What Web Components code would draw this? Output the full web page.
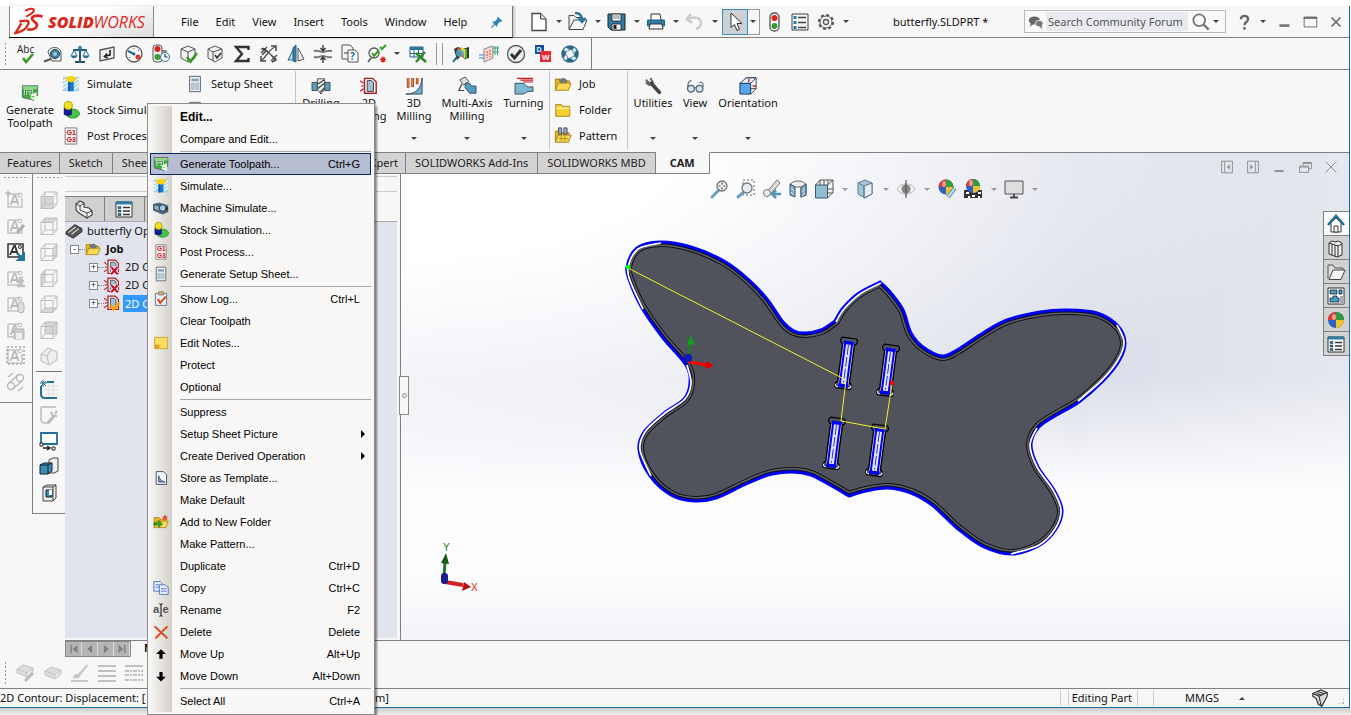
<!DOCTYPE html>
<html lang="en">
<head>
<meta charset="utf-8">
<title>butterfly.SLDPRT</title>
<style>
  body { margin: 0; background: #fff; font: 12px/16px "Noto Sans", "Open Sans", sans-serif; color: #111; }
</style>
</head>
<body>
<cad-app></cad-app>

<script>
/* ---------- icons, all on a 20 x 20 grid ---------- */

const cube = (face = '', stroke = '#bdbdbd') => `<path d="${face}" fill="#d6d6d6"/>
  <path d="M2 6.500h12v12h-12zM6 2h12v12h-12zM2 6.500L6 2M14 6.500L18 2M2 18.500L6 14M14 18.500L18 14" fill="none" stroke="${stroke}"/>`
const note = extra => `<path d="M2 4h12M2 4v13h14v-9" fill="none" stroke="#c4c4c4" stroke-width="1.500"/>
  <path d="M4.500 15L8 6h1.500l3 9M6 12h5" fill="none" stroke="#bbb" stroke-width="1.800"/><circle cx="14" cy="5" r="2" fill="none" stroke="#bbb"/>${extra}`
const lens = (x, y) => `<path d="M${x - 3} ${y + 4}L2 18" stroke="#6ba0bd" stroke-width="3" stroke-linecap="round"/>
  <circle cx="${x}" cy="${y}" r="5" fill="#e9eef2" stroke="#777" stroke-width="1.300"/>`
const ball = (x, y, r) => `<circle cx="${x}" cy="${y}" r="${r}" fill="#2c62c4"/>
  <path d="M${x} ${y}V${y - r}A${r} ${r} 0 0 0 ${x - r} ${y}z" fill="#e03a2b"/><path d="M${x} ${y}V${y - r}A${r} ${r} 0 0 1 ${x + r} ${y}z" fill="#2f9e3f"/>
  <path d="M${x} ${y}V${y + r}A${r} ${r} 0 0 0 ${x + r} ${y}z" fill="#f2c22e"/><ellipse cx="${x - 2}" cy="${y - 3}" rx="2" ry="3" fill="#fff" opacity=".5"/>`
const folder = '<path d="M1.500 17V4.500h6l1.500 2h8v2" fill="#e8b920" stroke="#a87e10"/><path d="M1.500 17l3-8h14.500l-3 8z" fill="#f7d958" stroke="#a87e10"/>'
const contour = mark => `<path d="M5 1.500h9l4 4V18H5z" fill="#fff" stroke="#b01c24" stroke-width="1.600"/><path d="M8 4h5l2 2v10H8z" fill="#9fc0d2" stroke="#334"/>
  <path d="M0 4l4 3M0 16l4-3M1 10h3" stroke="#b01c24" stroke-width="1.300"/>${mark}`

const icons = {
  abc: '<text x="1" y="9" font-size="10" font-family="Open Sans, sans-serif" fill="#222">Abc</text><path d="M7 14l3 4 7-8" fill="none" stroke="#3b9b22" stroke-width="2.600"/>',
  tape: '<path d="M5 8c1-6 12-6 13 0v9H9z" fill="#eee" stroke="#555"/><circle cx="12" cy="10" r="4.500" fill="#3d86ab" stroke="#234"/><circle cx="12" cy="10" r="2" fill="#9fc8dc"/><path d="M8 15l-7 2.500" stroke="#555" stroke-width="2"/>',
  scale: '<path d="M10 2v15M5 18h10M3 6h14" stroke="#22597a" stroke-width="2"/><path d="M1 12l3-6 3 6zM13 12l3-6 3 6z" fill="#e8f0f4" stroke="#2e6f94"/><path d="M1 12c1 3 5 3 6 0zM13 12c1 3 5 3 6 0z" fill="#2e6f94"/><circle cx="10" cy="4" r="2" fill="#2e7faa"/>',
  section: '<path d="M3 6l14-3v11L3 17z" fill="#eee" stroke="#555" stroke-width="1.300"/><path d="M13 6v5l-5 1M10 9.500L7.500 12.500l3 1.500" fill="none" stroke="#222" stroke-width="1.600"/>',
  gauge: '<circle cx="10" cy="10" r="8" fill="#fafafa" stroke="#555" stroke-width="1.300"/><path d="M10 10L4 7" stroke="#1b6d9c" stroke-width="2"/><path d="M10 4v1M15 6l-1 1M5 14l1-1" stroke="#555"/><circle cx="14" cy="13" r="2.500" fill="#d33"/><circle cx="10" cy="10" r="1.500" fill="#1b6d9c"/>',
  lights: '<rect x="2" y="1" width="9" height="17" rx="3" fill="#eee" stroke="#555"/><circle cx="6.500" cy="5" r="3" fill="#d9261c"/><circle cx="6.500" cy="13" r="3" fill="#3a9b2e"/><circle cx="14" cy="13" r="4.500" fill="#eef6fa" stroke="#2b6f93"/><path d="M14 10v3h2.500M11 7h5" stroke="#222" fill="none"/>',
  boxcheck: '<path d="M10 2l7 3v9l-7 4-7-4V5z" fill="#f2f2f2" stroke="#555"/><path d="M3 5l7 3 7-3M10 8v10" fill="none" stroke="#555"/><path d="M9 13l3.500 4.500L19 9" fill="none" stroke="#3b9b22" stroke-width="2.600"/>',
  boxcheck2: '<path d="M10 2l7 3v9l-7 4-7-4V5z" fill="#eee" stroke="#555"/><path d="M3 5l5 3v9M8 8l9-3" fill="none" stroke="#555"/><path d="M10 11l2 3 4-5" fill="none" stroke="#333" stroke-width="1.600"/>',
  sigma: '<path d="M16.500 6V3H4l6 7-6 7h12.500v-3" fill="none" stroke="#333" stroke-width="2.400"/>',
  cross: '<path d="M2 5c5-2 8 6 15 10M3 16C8 12 9 6 16 3M2 9l6-6M12 17l6-6" fill="none" stroke="#444" stroke-width="1.300"/><path d="M12 2h5v5M2 12v5h5M4 4l3 3-4 4M13 12l4 4-4 2" fill="none" stroke="#444" stroke-width="1.500"/>',
  mirror: '<path d="M2 16L8 4v12z" fill="#bddbe8" stroke="#245f80"/><path d="M10 1v17l-3-1V4z" fill="#3982a8" stroke="#245f80"/><path d="M12 4l6 11-6 2z" fill="#f3f3f3" stroke="#555"/>',
  thick: '<path d="M1 7c5-1 6 1 9 1s4-2 9-1M1 13c5 1 6-1 9-1s4 2 9 1" fill="none" stroke="#777" stroke-width="2"/><path d="M10 1v5M7.500 4l2.500 3 2.500-3M10 19v-5M7.500 16l2.500-3 2.500 3" fill="none" stroke="#333" stroke-width="1.300"/>',
  query: '<path d="M2 1h8l3 3v11H2z" fill="#f5f5f5" stroke="#555"/><path d="M8 6h7l3 3v9H8z" fill="#fff" stroke="#555"/><path d="M4 9h4" stroke="#333"/><text x="10" y="16" font-size="10" font-weight="bold" font-family="Open Sans, sans-serif" fill="#1d6d9b">?</text>',
  geom: '<circle cx="7" cy="9" r="5" fill="#fff" stroke="#555" stroke-width="1.300"/><path d="M5 9l2 3 5-6M13 3l2 2 4-4" fill="none" stroke="#3b9b22" stroke-width="2"/><path d="M4 14l-3 4" stroke="#555" stroke-width="1.500"/><path d="M14 13.500l4 4M18 13.500l-4 4M16 12.500v6M13 15.500h6" stroke="#d6201a" stroke-width="1.200"/>',
  excel: '<path d="M2 3h13v10H2z" fill="#fff" stroke="#245f80"/><path d="M2 3h13v3H2z" fill="#2d779f"/><path d="M2 9.500h13M6 6v7M10.500 6v7" stroke="#245f80"/><path d="M8 9l10 9M17 8l-9 10" stroke="#2f8a2a" stroke-width="2.600"/>',
  sim: '<path d="M2 5l4-2 4 2 7-2v11l-4 1-4-3-4 4z" fill="#333"/><path d="M6 6c4-3 6 2 5 7" fill="none" stroke="#e63a1e" stroke-width="3"/><path d="M9 5c4 0 5 5 4 9" fill="none" stroke="#f1dd26" stroke-width="3"/><path d="M14 5v9" stroke="#3bbb40" stroke-width="2"/><circle cx="8" cy="9" r="4" fill="#5bc2e7" opacity=".7"/><path d="M5 13l-4 5" stroke="#245f80" stroke-width="2"/>',
  flow: '<path d="M5 5l9-3v12l-9 4z" fill="#f7d9d6" stroke="#888"/><path d="M8 7v7M11 6v7" stroke="#d33" stroke-dasharray="2 1"/><path d="M0 11h5M0 14h5M14 4h6M14 8h6" stroke="#2c8fdc"/><path d="M16 2v9M18.500 2v9" stroke="#37b04b"/>',
  tick: '<circle cx="10" cy="10" r="8.500" fill="#f0f0f0" stroke="#555" stroke-width="1.300"/><path d="M5 10l3.500 4L15 6" fill="none" stroke="#333" stroke-width="3"/>',
  dw: '<path d="M2 1h9v9H2z" fill="#0c50a0"/><path d="M7 7h11v11H7z" fill="#ea2b35"/><text x="3.500" y="8" font-size="7" font-weight="bold" font-family="Liberation Sans, sans-serif" fill="#fff">D</text><text x="9" y="16" font-size="8" font-weight="bold" font-family="Liberation Sans, sans-serif" fill="#fff">W</text>',
  wheel: '<circle cx="10" cy="10" r="6.500" fill="none" stroke="#2c6788" stroke-width="4.500"/><path d="M6 3l4 3-4 2-3-2zM17 6l-3 4-2-4 2-3zM14 17l-4-3 4-2 3 2zM3 14l3-4 2 4-2 3z" fill="#d3e8f1" stroke="#245f80" stroke-width=".6"/>',
  new: '<path d="M3 1.500h8.500L17 7v11.500H3z" fill="#fff" stroke="#444" stroke-width="1.300"/><path d="M11.500 1.500V7H17" fill="#ddd" stroke="#444"/>',
  open: '<path d="M1 17V3.500h5l2 2h7V9" fill="#eee" stroke="#444"/><path d="M1 17.500L6 8h13l-4 9.500z" fill="#f5f5f5" stroke="#444"/><path d="M7 1c5 0 7 2 7 7M10.500 6l3.500 4 3.500-4" fill="none" stroke="#2a7499" stroke-width="2.400"/>',
  save: '<path d="M1 2h17v16H4l-3-3z" fill="#2f7ba2" stroke="#222"/><path d="M5 2h9v7H5z" fill="#f3f3f3" stroke="#222" stroke-width=".8"/><path d="M6 4h7M6 6h7" stroke="#888"/><path d="M5 12h9v6H5z" fill="#f3f3f3" stroke="#222" stroke-width=".8"/><path d="M6.500 13h3v4h-3z" fill="#222"/>',
  print: '<path d="M5 8V2h9l1 6" fill="#fff" stroke="#333"/><path d="M1.500 8h17v6h-17z" fill="#2f7ba2" stroke="#245f80"/><path d="M4 12h12l1 5H3z" fill="#f5f5f5" stroke="#333"/>',
  undo: '<path d="M6 2L2 7l5 4M3 7c7-3 13-1 13 4 0 3-2 5-5 6" fill="none" stroke="#ccc" stroke-width="2.600"/>',
  cursor: '<path d="M6 1v14.500l3.500-3 2.500 6 2.500-1-2.500-6H17z" fill="#fff" stroke="#333"/>',
  traffic: '<rect x="6" y="1" width="9" height="18" rx="4" fill="#f4f4f4" stroke="#555" stroke-width="1.300"/><circle cx="10.500" cy="6" r="3" fill="#d9261c"/><circle cx="10.500" cy="14" r="3" fill="#3a9b2e"/>',
  list: '<path d="M2 2h16v16H2z" fill="#f5f5f5" stroke="#444"/><path d="M8 5.500h8M8 10.500h8M8 15.500h8" stroke="#444" stroke-width="1.300"/><path d="M3.500 4h3v3h-3zM3.500 9h3v3h-3zM3.500 14h3v3h-3z" fill="#2f7ba2"/>',
  gear: '<circle cx="10" cy="10" r="7" fill="none" stroke="#555" stroke-width="2.200" stroke-dasharray="3 2.500"/><circle cx="10" cy="10" r="6" fill="#f7f7f7" stroke="#555"/><circle cx="10" cy="10" r="2.500" fill="none" stroke="#555" stroke-width="1.300"/>',
  pin: '<path d="M11 2l7 7-4 1-3 3-1 4-7-7 4-1 3-3z" fill="#2d86b4"/><path d="M7 13l-5 5" stroke="#2d86b4" stroke-width="1.800"/>',
  chat: '<ellipse cx="8" cy="8" rx="7" ry="5" fill="#666"/><path d="M4 11l-2 5 6-4z" fill="#666"/><ellipse cx="14" cy="12" rx="5" ry="4" fill="#777" stroke="#fff"/><path d="M14 15l4 4-1-5z" fill="#777"/>',
  search: '<circle cx="8" cy="8" r="6.500" fill="none" stroke="#777" stroke-width="2"/><path d="M13 13l5.500 5.500" stroke="#777" stroke-width="2.600"/>',
  help: '<path d="M6.500 7c0-5 8-5 8 0 0 3-4 3-4 6.500M10.500 15.500v3" fill="none" stroke="#666" stroke-width="2.600"/>',
  min: '<path d="M5 14h11" stroke="#777" stroke-width="3"/>',
  max: '<path d="M3.500 4.500h14v11h-14z" fill="none" stroke="#666"/><path d="M3 5.500h15" stroke="#666" stroke-width="2"/>',
  close: '<path d="M5 5l10 10M15 5L5 15" stroke="#666" stroke-width="1.800"/>',
  restore: '<path d="M8 8V5h9v7h-3M4 9h10v7H4z" fill="none" stroke="#888"/><path d="M8 6h9M4 10h10" stroke="#888"/>',
  mini: '<path d="M5 14.500h10" stroke="#888" stroke-width="2"/>',
  shut: '<path d="M4 4l12 12M16 4L4 16" stroke="#888"/>',
  paneL: '<path d="M4 3.500h12v13H4zM7.500 4v12" fill="none" stroke="#888"/><path d="M13 7l-3 3 3 3z" fill="#888"/>',
  paneR: '<path d="M4 3.500h12v13H4zM12.500 4v12" fill="none" stroke="#888"/><path d="M7 7l3 3-3 3z" fill="#888"/>',
  toolpath: '<path d="M1.500 2h17v11h-4v5l-13-3z" fill="#3fae3a" stroke="#567"/><path d="M2 2.500h16v3H2z" fill="#8fd980"/><path d="M5 12V7h7v4h-3M11 13l5-2v6l-5-2" fill="none" stroke="#e8f8e4" stroke-width="2.600"/><path d="M5 12V7h7v4h-3" fill="none" stroke="#2a6b27"/>',
  simulate: '<path d="M1 2h18v16H1z" fill="#a9d3ee"/><path d="M1 7l5-3M1 11l6-4M1 15l6-4M13 8l6-4M13 12l6-4M13 16l6-4" stroke="#fff" stroke-width="1.400"/><path d="M7 6h6v12H7z" fill="#1878d4"/><path d="M7 6h2v12H7z" fill="#0b54a6"/><ellipse cx="10" cy="4.500" rx="6" ry="3.500" fill="#f4d414"/>',
  machine: '<path d="M0 5l8-2 11 4v8l-7 3-12-5z" fill="#4b6477"/><circle cx="12" cy="10" r="4" fill="#a8cade" stroke="#234"/><path d="M2 7l5 1v5l-5-2z" fill="#8fb4cc"/><circle cx="17" cy="11" r="2" fill="#333"/>',
  stock: '<ellipse cx="12" cy="14" rx="7.500" ry="5" fill="#45c445" stroke="#2a8e30"/><path d="M2 7h9v8c-2 2-7 2-9 0z" fill="#141c8c"/><circle cx="7" cy="5" r="4.500" fill="#f0e018" stroke="#a39a10"/>',
  post: '<path d="M3.500 1h13v18h-13z" fill="#f3eeee" stroke="#777"/><text x="5" y="9" font-size="8" font-weight="bold" font-family="Liberation Sans, sans-serif" fill="#c01818">G1</text><text x="5" y="17" font-size="8" font-weight="bold" font-family="Liberation Sans, sans-serif" fill="#c01818">G3</text>',
  sheet: '<path d="M4 1.500h12v17H4z" fill="#f0f3f5" stroke="#556"/><path d="M6 4h8v3H6z" fill="#8ba2b0"/><path d="M6 9h3v7H6zM10.500 9h3.500v7h-3.500z" fill="#bccbd4" stroke="#8ba2b0" stroke-width=".6"/>',
  drill: '<path d="M0 6h6v9H0zM14 6h6v9h-6z" fill="#5b9dbb" stroke="#345"/><path d="M6 2h8v12l-4 5-4-5z" fill="#eee" stroke="#444"/><path d="M6 8l8-5M6 13l8-6M9 17l5-5" stroke="#444" stroke-width="1.500"/>',
  mill2d: contour(''),
  mill3d: '<path d="M1 19C13 19 18 12 19 1v18z" fill="#6ab0d4" stroke="#345"/><path d="M3.500 1v11M8.500 1v10M13.500 1v7" stroke="#a33b1b" stroke-width="3"/><path d="M3.500 1v10M8.500 1v9M13.500 1v6" stroke="#f3a263" stroke-width="1"/>',
  axis: '<path d="M2 3l6-3 4 5-6 4z" fill="#ddd" stroke="#444"/><path d="M4 8l-3 7h6" fill="none" stroke="#444" stroke-width="1.300"/><path d="M8 7h5l2 3h5v8h-7l-5-6z" fill="#4f9dc2" stroke="#345"/>',
  turning: '<path d="M2 1.500h18M6 3.500h14M9 5.500h11" stroke="#c21c1c" stroke-width="1.200"/><path d="M0 7h8c4 0 4 4 7 4h5v5h-5c-3 0-3 3-7 3H0z" fill="#7bb8d4" stroke="#345"/>',
  job: folder + '<path d="M5 5l6-2 4 3-1 3H7z" fill="#777"/>',
  folder: '<path d="M2 17V4h6l2 2h7.500v11z" fill="#f4d02e" stroke="#a87e10"/><path d="M2.500 8h14.500" stroke="#fbeb9a" stroke-width="2"/>',
  pattern: folder + '<path d="M5 1h3.500v7H5zM11 1h3.500v7H11z" fill="#9ab" stroke="#445"/><path d="M8 10v6M12 10v6M5 13h11" stroke="#a8901c"/>',
  wrench: '<path d="M2 3l4 4M7 1l3 5-4 3-4-3" fill="none" stroke="#666" stroke-width="2.200"/><path d="M8 7l9 10" stroke="#444" stroke-width="4" stroke-linecap="round"/>',
  glasses: '<circle cx="5.500" cy="13" r="3.800" fill="#cfe4f2" stroke="#567" stroke-width="1.400"/><circle cx="15" cy="13" r="3.800" fill="#cfe4f2" stroke="#567" stroke-width="1.400"/><path d="M2 11c0-4 1-7 4-7M19 11c0-3 0-6-4-5M9 12h2" fill="none" stroke="#567" stroke-width="1.200"/>',
  orient: '<path d="M8 1h11v12H8z" fill="#fff" stroke="#333"/><path d="M1 7h12v12H1z" fill="#58a7ec" stroke="#135"/><path d="M1 7l7-6h11l-6 6zM13 19l6-6" fill="#eaf4fc" stroke="#135"/><path d="M11 2v4M15 10h4" stroke="#c22" stroke-width="1.500"/>',
  n1: note('<path d="M2 0v6M-1 3h6" stroke="#aaa"/>'), n2: note('<path d="M11 17l7-8" stroke="#b0b0b0" stroke-width="3"/>'),
  n3: '<path d="M2 2h15v13H2z" fill="none" stroke="#333" stroke-width="1.500"/><path d="M4 13L8 4h1l3 9M5 10h6" fill="none" stroke="#333" stroke-width="1.800"/><circle cx="14" cy="5" r="1.500" fill="none" stroke="#333"/><path d="M11 11l6 6M18 12v6h-6z" stroke="#2477a0" stroke-width="2" fill="#2477a0"/>',
  n4: note('<path d="M14 9v8M10 13h8M11 18h8" stroke="#c0c0c0" stroke-width="2.500"/>'), n5: note('<rect x="12" y="8" width="6" height="11" rx="3" fill="#ddd" stroke="#b5b5b5"/>'),
  n6: note('<path d="M8 9h10v10H8z" fill="#ccc" stroke="#b5b5b5"/><path d="M10 13h6v6h-6z" fill="#eee"/>'), n7: note('<path d="M1 1h17v17H1z" fill="none" stroke="#bbb" stroke-width="2" stroke-dasharray="2 2"/>'),
  n8: '<circle cx="5" cy="14" r="3.500" fill="none" stroke="#bbb" stroke-width="1.500"/><circle cx="14" cy="6" r="3.500" fill="none" stroke="#bbb" stroke-width="1.500"/><path d="M3 11l9-8M7 17l9-8M2 5l5-4M12 19l5-4" stroke="#bbb" stroke-width="1.500"/>',
  c1: cube('M2 6h12v12H2z'), c2: cube('M2 6l4-4h12l-4 4z'), c3: cube('M14 6l4-4v12l-4 4z'), c4: cube('M2 6l4-4v12l-4 4z'),
  c5: cube('M2 18l4-4h12l-4 4z'), c6: cube('M6 2h12v12H6z'),
  c7: '<path d="M2 8l7-6 9 4v8l-8 5-8-4z" fill="#eee" stroke="#bbb"/><path d="M2 8l6 2 4-6M8 10l2 9" fill="none" stroke="#bbb"/>',
  sk1: '<path d="M7 7h12M7 11h12M7 15h12M10 4v14M14 4v14" stroke="#ddd"/><path d="M2 7v8c0 3 1 4 4 4h12M8 3h7" fill="none" stroke="#226f97" stroke-width="2"/><path d="M4 1v7M1 4h7M2 2l5 5M7 2L2 7" stroke="#226f97"/>',
  sk2: '<path d="M2 2h15M2 2v12c0 3 1 4 4 4h4" fill="none" stroke="#bbb" stroke-width="1.500"/><path d="M9 18l6-7" stroke="#bbb" stroke-width="3"/><path d="M12 7l2 4h4M18 6l-2 3" fill="none" stroke="#bbb" stroke-width="2"/>',
  sk3: '<path d="M2 2h16v11H2z" fill="#fff" stroke="#226f97" stroke-width="1.800"/><path d="M1 12h3v3H1zM13 16h3v3h-3z" fill="#fff" stroke="#222"/><path d="M4 17h6M8 15l3 2-3 2" fill="none" stroke="#222" stroke-width="1.400"/>',
  sk4: '<path d="M10 3l4-2h5v13l-4 2h-5z" fill="#eee" stroke="#444"/><path d="M1 8l4-2h8v8l-4 3H1z" fill="#3d8db3" stroke="#123"/><path d="M1 8h8l4-2M9 8v9" fill="none" stroke="#123"/>',
  sk5: '<path d="M4 4l4-2h9v13l-3 3H4z" fill="#eee" stroke="#444"/><path d="M4 4h10v14M14 4l3-2" fill="none" stroke="#444"/><path d="M7 7h6v7H7z" fill="#3d8db3" stroke="#123"/><path d="M10 7h3v5h-3z" fill="#fff"/>',
  zoomfit: lens(12, 7) + '<path d="M12 3.500v2M12 8.500v2M8.500 7h2M13.500 7h2" stroke="#444" stroke-width="1.200"/>',
  zoomarea: '<path d="M7 1h11v15H7z" fill="none" stroke="#666" stroke-dasharray="2 2"/>' + lens(11, 9),
  prev: '<path d="M3 15L15 1l3 3L7 17z" fill="#ddd" stroke="#777"/><circle cx="5" cy="14" r="3.500" fill="#eee" stroke="#777"/><path d="M19 15h-8M14 11l-4 4 4 4" fill="none" stroke="#5593b4" stroke-width="2.500"/>',
  cut: '<path d="M2 5c4-4 12-4 16 0v11l-5 2V8H7z" fill="#eee" stroke="#666"/><path d="M2 5l5 3v10l-5-2zM13 8l5-3v11l-5 2z" fill="#7ab0ca" stroke="#456"/><path d="M3 9l3 3M3 13l3 3M14 13l3-3M14 17l3-3" stroke="#dceaf1"/>',
  views: '<path d="M6 1h13v13H6z" fill="#f3f3f3" stroke="#555"/><path d="M10 1v5M14 1v5M14 10h5" stroke="#555"/><path d="M1.500 6h12v13h-12z" fill="#8fbdd2" stroke="#456"/><path d="M1.500 6L6 1M13.500 6L19 1M13.500 19l5-5" stroke="#555"/>',
  shade: '<path d="M3 4l7-3 7 3v11l-7 4-7-4z" fill="#9fc8db" stroke="#678"/><path d="M9 7l8-3v11l-8 4z" fill="#e3eef3" stroke="#678"/><path d="M3 4l6 3v12" fill="none" stroke="#678"/>',
  eye: '<path d="M1 10c4-7 14-7 18 0-4 7-14 7-18 0z" fill="#eee" stroke="#bbb"/><circle cx="10" cy="10" r="4.500" fill="#888"/><path d="M10 1v18" stroke="#555" stroke-width="1.200"/>',
  paint: ball(9, 8, 7.500) + '<path d="M18 9l-7 9" stroke="#5a92ae" stroke-width="4"/><path d="M18 9l-7 9" stroke="#cfe5ef" stroke-width="2"/>',
  scenery: '<path d="M1 11h18v8H1z" fill="#333"/><path d="M3 13h3v2H3zM9 16h3v2H9zM15 13h3v2h-3zM5 17h2v2H5zM15 17h2v2h-2z" fill="#fff"/>' + ball(10, 7, 7),
  monitor: '<path d="M1 2h18v13H1z" fill="#ddd" stroke="#555"/><path d="M10 15v4M6 18.500h8" stroke="#444" stroke-width="1.800"/>',
  home: '<path d="M5 9v9h10V9l-5-5z" fill="#fff" stroke="#333"/><path d="M2 11l8-9 8 9" fill="none" stroke="#2a7196" stroke-width="2.600"/><path d="M8 12h4v6H8z" fill="#fff" stroke="#333"/>',
  library: '<path d="M3 5l3-2 3 1 3-1 4 2v12l-5 2-8-3z" fill="#eee" stroke="#333"/><path d="M6 6v11M9 7v11M12 8v11M3 5l9 3 4-2" fill="none" stroke="#333"/>',
  files: '<path d="M2 17V3h5l2 3h8v3" fill="#ddd" stroke="#555"/><path d="M3 17.500L7 8h12l-4 9.500z" fill="#f5f5f5" stroke="#444"/>',
  palette: '<path d="M2 2h16v16H2z" fill="#fff" stroke="#333"/><path d="M4 4h7v4H4zM13 4h3v4h-3zM4 12h3v-2h4v2h2v4H4z" fill="#4a9cc2" stroke="#123" stroke-width=".8"/><path d="M14 10h4v8h-4z" fill="#aaa"/>',
  ball: ball(10, 10, 8),
  props: '<path d="M2 3h16v15H2z" fill="#fff" stroke="#333"/><path d="M2 2.500h16v3H2z" fill="#2f7ba2"/><path d="M9 8.500h7M9 12h7M9 15.500h7" stroke="#333" stroke-width="1.300"/><path d="M4 7.500h3v2H4zM4 11h3v2H4zM4 14.500h3v2H4z" fill="#2f86b0" stroke="#123" stroke-width=".5"/>',
  part: '<path d="M2 5l4-3 4 2v4l5 1 3 3v4l-5 3-8-5-3-3z" fill="#f0f0f0" stroke="#444" stroke-width="1.200"/><path d="M2 5l4 2v4l7 3v5M6 7l4-3M13 14l5-2" fill="none" stroke="#444"/>',
  machineop: '<path d="M0 11L11 2l9 5v4L9 19l-9-5z" fill="#555" stroke="#222"/><path d="M3 12l9-7M7 14l9-7" stroke="#ddd" stroke-width="1.500"/>',
  opbad: contour('<path d="M9 10l8 9M17 10l-8 9" stroke="#fff" stroke-width="5"/><path d="M9 10l8 9M17 10l-8 9" stroke="#c8102e" stroke-width="2.600"/>'),
  opok: contour('<path d="M8 13l4 5 7-8" fill="none" stroke="#f5a300" stroke-width="3.400"/>'),
  log: '<path d="M3 3h14v15H3z" fill="#e8f0f8" stroke="#567"/><path d="M7 1h6v4H7z" fill="#d9b070" stroke="#976"/><path d="M6 10l3 5 7-8" fill="none" stroke="#e0401c" stroke-width="2.400"/>',
  sticky: '<path d="M2 3h16v14H2z" fill="#fbdd63" stroke="#c99a1e"/><path d="M2 12h6v5H2z" fill="#d9a520"/>',
  store: '<path d="M4 2h9l4 4v12H4z" fill="#eaf2fa" stroke="#335"/><path d="M7 7v8h8c-4-1-7-3-8-8z" fill="#7aa6d8" stroke="#346"/>',
  addfolder: folder + '<path d="M1 11h6V8l5 4.500L7 17v-3H1z" fill="#35a22e" stroke="#1c641a" stroke-width=".6"/><path d="M15 0l1 3h3l-2 2 1 3-3-2-3 2 1-3-2-2h3z" fill="#e8432f"/>',
  copy: '<path d="M1 2h8l2 2v10H1z" fill="#e5f0ff" stroke="#3c62b0"/><path d="M3 6h5M3 9h5" stroke="#3c62b0"/><path d="M8 6h7l4 3v9H8z" fill="#e5f0ff" stroke="#3c62b0"/><path d="M10 11h7M10 14h7" stroke="#3c62b0"/>',
  rename: '<text x="0" y="14" font-size="14" font-weight="bold" font-family="Liberation Sans, sans-serif" fill="#555">a</text><text x="12" y="14" font-size="14" font-weight="bold" font-family="Liberation Sans, sans-serif" fill="#555">e</text><path d="M10 3v14M8 2l2 1 2-1M8 18l2-1 2 1" fill="none" stroke="#111" stroke-width="1.300"/>',
  delete: '<path d="M2 3l16 15M18 3L3 18" stroke="#ea3c12" stroke-width="2.400"/><path d="M4 3l14 13" stroke="#5ac6d8" stroke-width=".8"/>',
  up: '<path d="M10 4l6 6H4z" fill="#000"/><path d="M10 9v7" stroke="#000" stroke-width="4"/>',
  down: '<path d="M10 17l6-6H4z" fill="#000"/><path d="M10 5v7" stroke="#000" stroke-width="4"/>',
  b1: '<path d="M1 6l6-4 10 3-6 5zM1 6v4l10 4v-4M17 5v4l-6 5" fill="#ddd" stroke="#c4c4c4"/><path d="M9 18l8-8" stroke="#bbb" stroke-width="3"/>',
  b2: '<path d="M2 8l6-4 10 3-6 5zM2 8v4l10 4v-4M18 7v4l-6 5" fill="#ddd" stroke="#c4c4c4"/>',
  b3: '<path d="M3 15c0-4 3-4 5-4L17 1l1 2-8 10c-1 3-4 3-7 2z" fill="#c8c8c8"/><path d="M1 18h17" stroke="#c8c8c8" stroke-width="2"/>',
  b4: '<path d="M1 3h18M1 8h18M1 13h18M1 18h18" stroke="#c0c0c0" stroke-width="2"/>',
  b5: '<path d="M1 3h18" stroke="#c0c0c0" stroke-width="2"/><path d="M1 8h18M1 12h18M1 17h18" stroke="#c0c0c0" stroke-width="2" stroke-dasharray="4 1 2 1"/>',
  tag: '<path d="M2 5l9-4 7 3v4l-6 11-4-2-2-6-4-3z" fill="#ddd" stroke="#333" stroke-width="1.300"/><path d="M2 5l7 3 2 10M9 8l9-4M6 5l6 2M8 3l6 2" fill="none" stroke="#333" stroke-width="1.200"/>',
  first: '<path d="M15 4L8 10l7 6z" fill="#808080"/><path d="M6 4v12" stroke="#808080" stroke-width="2"/>',
  back: '<path d="M13 4l-7 6 7 6z" fill="#808080"/>',
  next: '<path d="M7 4l7 6-7 6z" fill="#808080"/>',
  last: '<path d="M5 4l7 6-7 6z" fill="#808080"/><path d="M14 4v12" stroke="#808080" stroke-width="2"/>'
}

/**
 * Base class: attaches an open shadow root and fills it from render().
 */
class ShadowElement extends HTMLElement {
  connectedCallback () {
    if (this.shadowRoot) return
    const template = document.createElement('template')
    template.innerHTML = this.render()
    this.attachShadow({ mode: 'open' }).appendChild(template.content.cloneNode(true))
  }
}

customElements.define('ui-icon', class extends ShadowElement {
  render () {
    return `<style>
      :host { display: block; flex: none; width: var(--icon, 20px); height: var(--icon, 20px); }
      svg { display: block; width: 100%; height: 100%; overflow: visible; }
    </style><svg viewBox="0 0 20 20" aria-hidden="true">${icons[this.getAttribute('name')] || ''}</svg>`
  }
})

/* items: icon names, "v" for a drop-down arrow, "|" for a separator */
customElements.define('tool-bar', class extends ShadowElement {
  render () {
    const cells = this.getAttribute('items').split(' ').map(name => {
      if (name === 'v') return '<button class="caret" aria-label="More"><i></i></button>'
      if (name === '|') return '<span class="sep"></span>'
      return `<button class="cell" aria-label="${name}"><ui-icon name="${name}"></ui-icon></button>`
    })
    return `<style>
      :host { display: flex; align-items: center; }
      :host([vertical]) { flex-direction: column; }
      button { border: 0; padding: 0; background: none; display: flex; align-items: center; justify-content: center; flex: none; }
      .cell { width: var(--cell, 27px); height: var(--cell-height, 26px); }
      .caret { width: var(--caret, 14px); height: 20px; }
      .caret i { border: 3px solid transparent; border-top-color: var(--caret-color, #444); border-bottom: 0; }
      .sep { width: 5px; height: 22px; border: solid #999; border-width: 0 1px; margin: 0 5px; }
      :host([vertical]) .sep { width: 26px; height: 0; border-width: 1px 0 0; border-color: #777; margin: 2px 0 4px; }
      .grip { width: 3px; height: 24px; background: radial-gradient(circle, #999 1px, transparent 1px) 0 0 / 3px 4px; margin: 0 5px 0 4px; }
      :host([vertical]) .grip { width: 26px; height: 3px; background-size: 4px 3px; margin: 2px 0 8px; }
    </style>${this.hasAttribute('grip') ? '<span class="grip"></span>' : ''}${cells.join('')}`
  }
})

customElements.define('title-bar', class extends ShadowElement {
  render () {
    const menus = ['File', 'Edit', 'View', 'Insert', 'Tools', 'Window', 'Help']
    return `<style>
      :host { display: flex; height: 32px; box-sizing: border-box; background: #f7f7f7; }
      button { border: 0; padding: 0; background: none; font: inherit; color: inherit; }
      .brand { display: flex; box-sizing: border-box; width: 504px; border-bottom: 1px solid #000; margin-left: 9px; border-right: 1px solid #777; box-shadow: 2px 0 2px #ccc; align-items: center; }
      .logo { display: flex; align-items: center; align-self: stretch; width: 143px; border: solid #888; border-width: 0 1px; background: linear-gradient(160deg, #fff 45%, #ddd); color: #da291c; font: italic 16px/32px "Open Sans", sans-serif; }
      .logo svg { width: 30px; height: 29px; margin: 0 4px 0 4px; flex: none; }
      .logo b { font-weight: 800; }
      .menus { display: flex; gap: 17px; padding-left: 27px; font-size: 11px; flex: 1; }
      .pin { margin-right: 4px; }
      .rest { flex: 1; display: flex; align-items: center; border-bottom: 1px solid #808080; min-width: 0; }
      .quick { margin-left: 13px; --cell: 26px; --caret: 13px; }
      .select { display: flex; border: 1px solid #9a9a9a; box-sizing: border-box; height: 26px; margin: 0 1px; }
      .select .on { display: block; background: #cdd0d4; border: 1px solid #3c8dbf; margin: -1px; padding: 2px; --icon: 20px; width: 26px; }
      .select .drop { width: 12px; padding: 0 3px; }
      .select .drop i, .arrow i { display: block; border: 3px solid transparent; border-top-color: #444; border-bottom: 0; }
      .name { margin-left: 40px; font-size: 11px; flex: 1; white-space: nowrap; }
      form { display: flex; align-items: center; box-sizing: border-box; width: 202px; height: 23px; border: 1px solid #bbb; background: #fafafa; padding: 0 3px; --icon: 16px; margin: 0 6px 0 0; }
      input { width: 139px; flex: 1; border: 0; padding: 0 2px; margin: 0 4px 0 2px; height: 19px; background: #eaebf0; font: 11px "Noto Sans", sans-serif; min-width: 0; outline: 0; }
      input::placeholder { color: #555; opacity: 1; }
      form .find { --icon: 18px; }
      .arrow { width: 12px; padding: 0 3px; }
      .sys { --cell: 26px; --icon: 18px; }
    </style>
    <div class="brand">
      <div class="logo">
        <svg viewBox="0 0 30 30"><path d="M11 4c5-3 9-3 9 0 0 2-4 4-8 6" fill="none" stroke="#da291c" stroke-width="2.200"/><path d="M5 15c8-2 11-1 9 3-2 5-8 8-13 9l6-10" fill="none" stroke="#da291c" stroke-width="2.400"/><path d="M29 10c-4-2-11-1-11 2s7 4 5 8c-1 3-6 4-10 3" fill="none" stroke="#da291c" stroke-width="2.800"/></svg>
        <span><b>SOLID</b>WORKS</span>
      </div>
      <nav class="menus">${menus.map(m => `<button>${m}</button>`).join('')}</nav>
      <tool-bar class="pin" style="--icon: 14px; --cell: 22px" items="pin"></tool-bar>
    </div>
    <div class="rest">
      <tool-bar class="quick" items="new v open v save v print v undo v"></tool-bar>
      <div class="select"><button class="on" aria-label="Select"><ui-icon name="cursor"></ui-icon></button><button class="drop" aria-label="Select options"><i></i></button></div>
      <tool-bar style="--cell: 26px" items="traffic list gear v"></tool-bar>
      <span class="name">butterfly.SLDPRT *</span>
      <form><ui-icon name="chat"></ui-icon><input aria-label="Search" placeholder="Search Community Forum"><ui-icon class="find" name="search"></ui-icon><button type="button" class="arrow" aria-label="Search scope"><i></i></button></form>
      <tool-bar class="sys" style="--cell: 23px; --caret: 16px" items="help v"></tool-bar>
      <tool-bar class="sys" items="min max close"></tool-bar>
    </div>`
  }
})

/* ribbon button with its picture above the caption */
customElements.define('ribbon-button', class extends ShadowElement {
  render () {
    return `<style>
      :host { display: flex; width: var(--w, 54px); }
      button { flex: 1; border: 0; padding: 0; background: none; font: inherit; color: inherit; line-height: 13px; display: flex; flex-direction: column; align-items: center; }
      ui-icon { margin-bottom: 1px; --icon: 18px; }
      .text { flex: 1; white-space: pre-line; }
      i { border: 3px solid transparent; border-top-color: #444; border-bottom: 0; margin-bottom: 9px; }
    </style><button><ui-icon name="${this.getAttribute('icon')}"></ui-icon><span class="text"><slot></slot></span>${this.hasAttribute('menu') ? '<i></i>' : ''}</button>`
  }
})

customElements.define('ribbon-row', class extends ShadowElement {
  render () {
    return `<style>
      button { display: flex; align-items: center; gap: 7px; height: 26px; border: 0; padding: 0; background: none; font: inherit; color: inherit; white-space: nowrap; --icon: 18px; }
    </style><button><ui-icon name="${this.getAttribute('icon')}"></ui-icon><slot></slot></button>`
  }
})

customElements.define('cam-ribbon', class extends ShadowElement {
  render () {
    return `<style>
      :host { display: flex; height: 82px; background: #f7f7f7; font-size: 11px; box-sizing: border-box; overflow: hidden; }
      .group { display: flex; border-right: 1px solid #c4c4c4; margin: 1px 0 3px; }
      .group:last-child { border: 0; }
      .col { display: flex; flex-direction: column; }
      ribbon-button { padding-top: 6px; }
      .first { padding-top: 13px; }
    </style>
    <div class="group" style="width: 295px">
      <ribbon-button class="first" style="--w: 60px" icon="toolpath">Generate<br>Toolpath</ribbon-button>
      <div class="col" style="width: 124px; padding-left: 2px"><ribbon-row icon="simulate">Simulate</ribbon-row><ribbon-row icon="stock">Stock Simulation</ribbon-row><ribbon-row icon="post">Post Process</ribbon-row></div>
      <div class="col"><ribbon-row icon="sheet">Setup Sheet</ribbon-row><ribbon-row icon="sheet"></ribbon-row></div>
    </div>
    <div class="group">
      <ribbon-button style="--w: 50px" icon="drill" menu>Drilling</ribbon-button>
      <ribbon-button style="--w: 46px" icon="mill2d" menu>2D<br>Milling</ribbon-button>
      <ribbon-button style="--w: 44px" icon="mill3d" menu>3D<br>Milling</ribbon-button>
      <ribbon-button style="--w: 62px" icon="axis" menu>Multi-Axis<br>Milling</ribbon-button>
      <ribbon-button style="--w: 51px" icon="turning" menu>Turning</ribbon-button>
    </div>
    <div class="group"><div class="col" style="width: 73px; padding-left: 4px"><ribbon-row icon="job">Job</ribbon-row><ribbon-row icon="folder">Folder</ribbon-row><ribbon-row icon="pattern">Pattern</ribbon-row></div></div>
    <div class="group">
      <ribbon-button style="--w: 50px" icon="wrench" menu>Utilities</ribbon-button>
      <ribbon-button style="--w: 34px" icon="glasses" menu>View</ribbon-button>
      <ribbon-button style="--w: 72px" icon="orient" menu>Orientation</ribbon-button>
    </div>`
  }
})

customElements.define('command-tabs', class extends ShadowElement {
  render () {
    return `<style>
      :host { display: flex; height: 22px; font-size: 11px; }
      button { font: inherit; color: #222; border: 1px solid #808080; border-left: 0; background: #d3d3d3; padding: 0 9px; white-space: nowrap; }
      .run { display: flex; width: 406px; }
      .run button:first-child, .run button:last-child { padding: 0 7px; }
      .stretch { flex: 1; }
      .on { background: #f7f7f7; border-top-color: #f7f7f7; font-weight: bold; padding: 0 14px; }
      .rest { flex: 1; border-top: 1px solid #808080; display: flex; justify-content: flex-end; align-items: center; padding: 6px 5px 0 0; --icon: 18px; --cell: 26px; }
    </style>
    <div class="run"><button>Features</button><button>Sketch</button><button>Sheet</button><button class="stretch" aria-label="Evaluate"></button><button aria-label="DimXpert">Xpert</button></div>
    <button>SOLIDWORKS Add-Ins</button><button>SOLIDWORKS MBD</button><button class="on">CAM</button>
    <div class="rest"><tool-bar items="paneL paneR mini restore shut"></tool-bar></div>`
  }
})

customElements.define('operation-tree', class extends ShadowElement {
  render () {
    const op = (icon, text, on = '') => `<li class="child ${on}"><span class="box">+</span><span class="dots"></span><ui-icon name="${icon}"></ui-icon><span class="text">${text}</span></li>`
    return `<style>
      :host { display: flex; flex-direction: column; background: #f7f7f7; width: 335px; box-sizing: border-box; padding: 2px 3px 2px 0; }
      .top { height: 14px; border: solid #ccc; border-width: 1px 0; margin-bottom: 4px; }
      .tabs { display: flex; height: 25px; border-bottom: 1px solid #aaa; }
      .tabs button { width: 40px; padding: 0 9px; border: solid #808080; border-width: 1px 1px 0 0; background: #d0d0d0; --icon: 20px; }
      ul { flex: 1; margin: 0; padding: 0; list-style: none; background: #e1e4ed; font-size: 11px; overflow: hidden; white-space: nowrap; --icon: 16px; }
      li { display: flex; align-items: center; height: 18px; }
      .root { padding-left: 1px; gap: 5px; }
      .job { padding-left: 5px; font-weight: bold; }
      .child { padding-left: 24px; }
      .box { width: 7px; height: 7px; border: 1px solid #888; background: #fff; font: 9px/7px "Liberation Sans", sans-serif; color: #225; text-align: center; }
      .dots { width: 6px; border-top: 1px dotted #888; }
      li ui-icon { margin-right: 5px; }
      .root ui-icon { margin-right: 0; }
      .child .text { padding: 0 2px; }
      .child ui-icon { margin-right: 3px; }
      .on .text { background: #3399ff; color: #fff; line-height: 17px; }
    </style>
    <div class="top"></div>
    <div class="tabs"><button aria-label="Feature tree"><ui-icon name="part"></ui-icon></button><button aria-label="Properties"><ui-icon name="props"></ui-icon></button><button aria-label="Configurations"></button></div>
    <ul>
      <li class="root"><ui-icon name="machineop"></ui-icon>butterfly Op</li>
      <li class="job"><span class="box">-</span><span class="dots"></span><ui-icon name="job"></ui-icon>Job</li>
      ${op('opbad', '2D Contour')}${op('opbad', '2D Contour')}${op('opok', '2D Contour', 'on')}
    </ul>`
  }
})

/* outline of the part, clockwise; the three runs meet at the sharp corners */
const outline = [
  [[849, 496], [830, 485], [811, 475], [792, 472], [768, 475], [744, 485], [716, 498], [694, 501], [671, 495], [650, 476], [639, 450], [644, 432], [663, 414], [684, 399], [690, 383], [686, 365], [663, 338], [642, 308], [630, 282], [627, 267], [637, 248], [660, 242], [691, 247], [724, 261], [748, 279], [767, 299], [783, 322], [794, 331], [806, 333], [821, 330], [835, 321]],
  [[835, 321], [843, 308], [859, 293], [880, 282]],
  [[880, 282], [891, 293], [903, 310], [911, 333], [923, 347], [942, 356], [957, 350], [983, 333], [1007, 320], [1040, 312], [1067, 310], [1097, 313], [1118, 326], [1125, 343], [1119, 361], [1103, 381], [1079, 402], [1055, 416], [1038, 428], [1031, 445], [1038, 467], [1054, 490], [1062, 510], [1056, 529], [1040, 545], [1012, 554], [984, 547], [958, 529], [932, 505], [911, 493], [888, 488], [866, 491], [849, 496]]
]

/* Catmull-Rom run as cubic segments */
function smooth (pts, move = true) {
  let d = move ? `M${pts[0]}` : ''
  for (let i = 0; i < pts.length - 1; i++) {
    const a = pts[i - 1] || pts[i]
    const b = pts[i]
    const c = pts[i + 1]
    const e = pts[i + 2] || c
    d += `C${b[0] + (c[0] - a[0]) / 6} ${b[1] + (c[1] - a[1]) / 6} ${c[0] - (e[0] - b[0]) / 6} ${c[1] - (e[1] - b[1]) / 6} ${c[0]} ${c[1]}`
  }
  return d
}

customElements.define('part-scene', class extends ShadowElement {
  render () {
    const body = outline.map((run, i) => smooth(run, i === 0)).join('') + 'z'
    const gap = (run, from, to, dx, dy) => `<path d="${smooth(outline[run].slice(from, to))}" transform="translate(${dx} ${dy})" stroke="#fff" stroke-width="1.800"/>`
    const slot = (x, y) => `<g transform="translate(${x} ${y}) rotate(7.500)">
      <path d="M-7-3H7q3 3 0 6H6V42h1q3 3 0 6H-7q-3-3 0-6h1V3h-1q-3-3 0-6z" fill="#50525c" stroke="#000" stroke-width="1.200"/>
      <path d="M-5 2H5V44H-5z" fill="#e6e9f2"/><path d="M-3.500 1V45M3.500 1V45" stroke="#00f" stroke-width="2"/><path d="M0 4V42" stroke="#00f" stroke-width=".8" stroke-dasharray="10 2"/>
      <path d="M-5 2H5M-5 45H5" stroke="#00f" stroke-width="3.500"/><path d="M-8 44q0 3 3 3M8 44q0 3-3 3" stroke="#fff" fill="none"/></g>`
    return `<style>
      :host { display: block; position: absolute; inset: 0; }
      svg { display: block; width: 100%; height: 100%; }
    </style>
    <svg viewBox="401 174 948 466" role="img" aria-label="Butterfly part with toolpath">
      <clipPath id="edge"><path d="${body}"/></clipPath>
      <g fill="none">
        <g clip-path="url(#edge)">
          <path d="${body}" fill="#50525c" stroke="#111" stroke-width="10"/>
          <path d="${body}" stroke="#5f616b" stroke-width="8"/>
          <path d="${body}" stroke="#111" stroke-width="5"/>
        </g>
        <path d="${body}" stroke="#0000f4" stroke-width="3"/>
        ${gap(0, 17, 22, 1, 1)}${gap(0, 9, 16, 1, 0)}${gap(1, 0, 4, 1, 1)}${gap(2, 12, 17, -1, -1)}${gap(2, 18, 26, -1, 0)}
      </g>
      ${slot(849, 341)}${slot(891, 348)}${slot(837, 421)}${slot(880, 428)}
      <path d="M628 268L846 380L841 421L885 429L892 384" fill="none" stroke="#f4f028"/>
      <path d="M626 265h4v4h-4z" fill="#0f0"/><path d="M890 381h4v4h-4z" fill="#f00"/>
      <path d="M688 358l2-18" stroke="#0a8c14" stroke-width="2"/><path d="M691 335l4 10-8-1z" fill="#12a01c"/>
      <path d="M689 362l18 3" stroke="#f00" stroke-width="3"/><path d="M714 366l-9 3 2-8z" fill="#d00"/>
      <circle cx="688" cy="358" r="4" fill="#1018c0"/>
      <path d="M444 576l1-14" stroke="#1b7a1e" stroke-width="3"/><path d="M446 553l3 11-8-1z" fill="#145c17"/>
      <path d="M445 582l18 3" stroke="#d42020" stroke-width="4"/><path d="M471 587l-9 4 2-9z" fill="#b01010"/>
      <rect x="441" y="573" width="7" height="11" rx="3" fill="#1a1f8c"/>
      <text x="443" y="551" font-family="Liberation Sans, sans-serif" font-size="10" fill="#128018">Y</text>
      <text x="471" y="591" font-family="Liberation Sans, sans-serif" font-size="10" fill="#e01818">X</text>
    </svg>`
  }
})

customElements.define('model-view', class extends ShadowElement {
  render () {
    const tasks = ['home', 'library', 'files', 'palette', 'ball', 'props']
    return `<style>
      :host { display: flex; flex: 1; position: relative; border-left: 1px solid #808080; align-items: flex-start; min-width: 0; }
      .heads-up { position: relative; flex: 1; display: flex; justify-content: center; padding: 2px 0 0 25px; --cell: 26px; --caret: 15px; --caret-color: #999; }
      aside { position: relative; margin-top: 37px; width: 25px; border: 1px solid #808080; border-width: 1px 0 0 1px; }
      aside button { display: block; width: 25px; height: 24px; box-sizing: border-box; padding: 2px; border: 0; border-bottom: 1px solid #808080; background: #d2d2d2; }
      aside button:first-child { background: #fafafa; }
      .handle { position: absolute; left: -2px; top: 202px; width: 8px; height: 37px; border: 1px solid #888; background: #f7f7f7; display: flex; align-items: center; justify-content: center; }
      .handle::after { content: ""; width: 3px; height: 3px; border: 1px solid #888; border-radius: 50%; }
    </style>
    <part-scene></part-scene>
    <div class="heads-up"><tool-bar items="zoomfit zoomarea prev cut views v shade v eye v paint scenery v monitor v"></tool-bar></div>
    <aside>${tasks.map(t => `<button aria-label="${t}"><ui-icon name="${t}"></ui-icon></button>`).join('')}</aside>
    <div class="handle"></div>`
  }
})

customElements.define('context-menu', class extends ShadowElement {
  render () {
    // icon | caption | shortcut; a dash makes a separator
    const rows = ['|Edit...|', '|Compare and Edit...|', '-', 'toolpath|Generate Toolpath...|Ctrl+G', 'simulate|Simulate...|', 'machine|Machine Simulate...|',
      'stock|Stock Simulation...|', 'post|Post Process...|', 'sheet|Generate Setup Sheet...|', '-', 'log|Show Log...|Ctrl+L', '|Clear Toolpath|', 'sticky|Edit Notes...|',
      '|Protect|', '|Optional|', '-', '|Suppress|', '|Setup Sheet Picture|>', '|Create Derived Operation|>', 'store|Store as Template...|', '|Make Default|',
      'addfolder|Add to New Folder|', '|Make Pattern...|', '|Duplicate|Ctrl+D', 'copy|Copy|Ctrl+C', 'rename|Rename|F2', 'delete|Delete|Delete',
      'up|Move Up|Alt+Up', 'down|Move Down|Alt+Down', '-', '|Select All|Ctrl+A']
    const row = r => {
      if (r === '-') return '<hr>'
      const [icon, text, key] = r.split('|')
      return `<button role="menuitem"><span class="pic">${icon ? `<ui-icon name="${icon}"></ui-icon>` : ''}</span><span class="text">${text}</span>${key === '>' ? '<i></i>' : `<span class="key">${key}</span>`}</button>`
    }
    return `<style>
      :host { display: block; box-sizing: border-box; width: 228px; padding: 2px 3px 2px 2px; border: 1px solid #8c8c8c; box-shadow: 2px 3px 2px rgba(0, 0, 0, .45);
        background: linear-gradient(90deg, #f7f6f4, #d3d0c8) 2px 2px / 22px calc(100% - 4px) no-repeat #f9f8f7; font: 11px/20px "Liberation Sans", sans-serif; color: #000; }
      button { display: flex; align-items: center; width: 100%; height: 22px; box-sizing: border-box; border: 1px solid transparent; background: none; padding: 0; font: inherit; color: inherit; text-align: left; --icon: 16px; }
      button:first-of-type { font-weight: bold; font-size: 12px; }
      button:nth-of-type(3) { background: #b6bdd2; border-color: #0a246a; }
      .pic { width: 29px; padding-left: 2px; box-sizing: border-box; }
      .text { flex: 1; }
      .key { padding-right: 10px; }
      i { border: 4px solid transparent; border-left-color: #000; border-right: 0; margin-right: 5px; }
      hr { border: 0; border-top: 1px solid #a6a6a6; margin: 1px 0 1px 30px; }
    </style>${rows.map(row).join('')}`
  }
})

customElements.define('status-bar', class extends ShadowElement {
  render () {
    return `<style>
      :host { display: flex; align-items: center; height: 20px; box-sizing: border-box; border: solid #808080; border-width: 1px 0; border-bottom-color: #1a6ca8; background: #f7f7f7; font-size: 11px; white-space: nowrap; }
      .left { display: flex; width: 389px; justify-content: space-between; }
      .fill { flex: 1; }
      .gutter { width: 7px; height: 16px; border-left: 1px solid #ccc; }
      .cell { border: solid #ccc; border-width: 0 1px; padding: 0 5px 0 3px; margin-right: 15px; line-height: 16px; }
      .units { border-left: 1px solid #ccc; padding: 0 20px 0 31px; line-height: 16px; }
      i { border: 3px solid transparent; border-bottom-color: #444; border-top: 0; margin-right: 66px; }
      ui-icon { --icon: 18px; margin-right: 8px; }
      .grip { width: 9px; height: 9px; margin: 6px 3px 0 0; background: radial-gradient(circle, #bbb 1px, transparent 1px) 0 0 / 4px 4px; clip-path: polygon(100% 0, 100% 100%, 0 100%); }
    </style>
    <div class="left"><span>2D Contour: Displacement: [</span><span>mm]</span></div>
    <span class="fill"></span>
    <span class="gutter"></span><span class="cell">Editing Part</span>
    <span class="units">MMGS</span><i></i><ui-icon name="tag"></ui-icon><span class="grip"></span>`
  }
})

customElements.define('cad-app', class extends ShadowElement {
  render () {
    return `<style>
      :host { display: flex; flex-direction: column; height: 100vh; box-sizing: border-box; padding-top: 6px; position: relative; overflow: hidden; }
      .window { flex: 1; display: flex; flex-direction: column; margin-right: 1px; border-right: 1px solid #1a6ca8; min-height: 0; background: #f7f7f7; }
      .tools { display: flex; height: 32px; box-sizing: border-box; border-bottom: 1px solid #808080; }
      .tools tool-bar { border-right: 1px solid #808080; padding-right: 8px; }
      .work { flex: 1; min-height: 0; display: flex; flex-direction: column; background:
        linear-gradient(180deg, transparent 46%, #fdfdfe 70%, #fdfdfe 86%, #f3f4f8),
        radial-gradient(ellipse 66% 72% at 30% 0, #fff 30%, transparent),
        linear-gradient(90deg, #e6e9f1 30%, #dadde8 80%, #e6e8ef); }
      .body { flex: 1; display: flex; min-height: 0; }
      .left { display: flex; background: #f7f7f7; align-items: flex-start; }
      .left tool-bar { width: 32px; border-bottom: 1px solid #808080; box-sizing: border-box; padding-bottom: 7px; }
      .left tool-bar + tool-bar { width: 33px; border-left: 1px solid #808080; }
      .foot { height: 48px; }
      .model { display: flex; margin-left: 65px; border-top: 1px solid #808080; height: 16px; --cell: 16px; --cell-height: 15px; --icon: 14px; font: bold 11px/14px "Noto Sans", sans-serif; }
      .model tool-bar { background: linear-gradient(90deg, transparent 15px, #ddd 15px) 0 0 / 16px 100% #b5b5b5; border: 1px solid #888; margin-right: 13px; box-sizing: border-box; }
      .foot .lines { height: 31px; }
      .edge { height: 7px; background: linear-gradient(#ccc, #eee); }
      context-menu { position: absolute; left: 147px; top: 103px; }
    </style>
    <div class="window">
      <title-bar></title-bar>
      <div class="tools"><tool-bar grip items="abc tape scale section gauge lights boxcheck boxcheck2 sigma cross mirror thick query geom v excel | sim flow tick dw wheel"></tool-bar></div>
      <cam-ribbon></cam-ribbon>
      <div class="work">
        <command-tabs></command-tabs>
        <div class="body">
          <div class="left"><tool-bar vertical grip items="n1 n2 n3 n4 n5 n6 n7 n8"></tool-bar><tool-bar vertical grip items="c1 c2 c3 c4 c5 c6 c7 | sk1 sk2 sk3 sk4 sk5"></tool-bar></div>
          <operation-tree></operation-tree>
          <model-view></model-view>
        </div>
      </div>
      <div class="foot">
        <div class="model"><tool-bar items="first back next last"></tool-bar>Model</div>
        <tool-bar class="lines" grip items="b1 b2 b3 b4 b5"></tool-bar>
      </div>
      <status-bar></status-bar>
    </div>
    <div class="edge"></div>
    <context-menu></context-menu>`
  }
})
</script>
</body>
</html>
